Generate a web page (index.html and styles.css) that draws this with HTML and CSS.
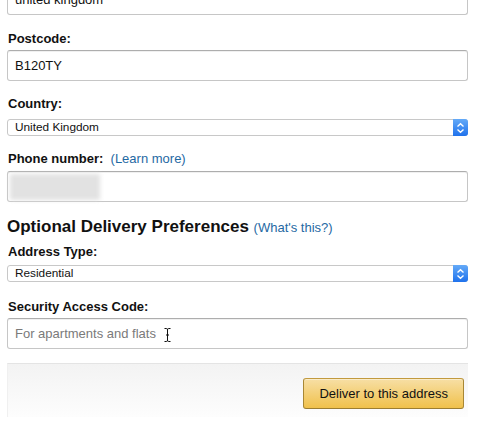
FILE: index.html
```html
<!DOCTYPE html>
<html>
<head>
<meta charset="utf-8">
<link rel="stylesheet" href="styles.css">
</head>
<body>
<div class="form">
  <div class="field first">
    <div class="input">united kingdom</div>
  </div>
  <div class="field">
    <div class="label">Postcode:</div>
    <div class="input">B120TY</div>
  </div>
  <div class="field">
    <div class="label">Country:</div>
    <div class="select country"><span class="select-text">United Kingdom</span><span class="arrows"><svg width="9" height="12" viewBox="0 0 9 12"><path d="M1.5 4.5 L4.5 1.8 L7.5 4.5 M1.5 7.5 L4.5 10.2 L7.5 7.5" fill="none" stroke="#fff" stroke-width="1.4"/></svg></span></div>
  </div>
  <div class="field">
    <div class="label phone-label">Phone number:&nbsp; <a class="link">(Learn more)</a></div>
    <div class="input phone"><span class="blur"></span></div>
  </div>
  <h2 class="heading">Optional Delivery Preferences <a class="link">(What's this?)</a></h2>
  <div class="field type">
    <div class="label">Address Type:</div>
    <div class="select"><span class="select-text">Residential</span><span class="arrows"><svg width="9" height="12" viewBox="0 0 9 12"><path d="M1.5 4.5 L4.5 1.8 L7.5 4.5 M1.5 7.5 L4.5 10.2 L7.5 7.5" fill="none" stroke="#fff" stroke-width="1.4"/></svg></span></div>
  </div>
  <div class="field last">
    <div class="label">Security Access Code:</div>
    <div class="input placeholder">For apartments and flats<span class="ibeam"><svg width="7" height="14" viewBox="0 0 7 14"><path d="M0.5 0.5 H2.5 Q3.5 0.5 3.5 2 V12 Q3.5 13.5 2.5 13.5 H0.5 M6.5 0.5 H4.5 Q3.5 0.5 3.5 2 V12 Q3.5 13.5 4.5 13.5 H6.5 M2 7 H5" fill="none" stroke="#111" stroke-width="1"/></svg></span></div>
  </div>
  <div class="footer">
    <button class="btn">Deliver to this address</button>
  </div>
</div>
</body>
</html>
```

FILE: styles.css
```css
html, body {
  margin: 0;
  padding: 0;
  background: #fff;
  overflow: hidden;
}
body {
  font-family: "Liberation Sans", Arial, sans-serif;
  font-size: 13px;
  color: #111;
}
.form {
  margin-top: -16px;
  padding: 0 20px 0 7px;
}
.field {
  margin-bottom: 15px;
}
.field.first {
  margin-bottom: 16px;
}
.field.type {
  margin-bottom: 17px;
}
.field.last {
  margin-bottom: 14px;
}
.label {
  font-weight: bold;
  line-height: 16px;
  margin-bottom: 3px;
  padding-left: 1px;
}
.label.phone-label {
  margin-bottom: 4px;
}
.label .link {
  font-weight: normal;
}
.link {
  color: #1f69a3;
  text-decoration: none;
}
.input {
  box-sizing: border-box;
  height: 31px;
  border: 1px solid #c6c6c6;
  border-top-color: #adadad;
  border-radius: 3px;
  box-shadow: inset 0 1px 0 rgba(0,0,0,0.06);
  padding: 0 7px;
  display: flex;
  align-items: center;
  font-size: 13px;
  color: #111;
}
.input.phone {
  padding: 2px 2px;
}
.blur {
  display: block;
  width: 90px;
  height: 26px;
  background: #e2e2e2;
  filter: blur(2px);
}
.input.placeholder {
  color: #7a7a7a;
}
.ibeam {
  display: inline-flex;
  margin-left: 8px;
  margin-top: 2px;
}
.select {
  box-sizing: border-box;
  height: 17px;
  border: 1px solid #c8c8c8;
  border-radius: 3px;
  display: flex;
  align-items: stretch;
  margin-top: 5px;
  background: #fff;
}
.select.country {
  margin-top: 7px;
}
.select-text {
  flex: 1;
  padding-left: 7px;
  font-size: 11.8px;
  line-height: 15px;
  color: #111;
}
.arrows {
  width: 15px;
  margin: -1px -1px -1px 0;
  border-radius: 0 3px 3px 0;
  background: linear-gradient(#64aaf8, #1f72ec);
  display: flex;
  align-items: center;
  justify-content: center;
}
.heading {
  font-size: 17px;
  line-height: 20px;
  font-weight: bold;
  margin: 0 0 6px 0;
  color: #111;
}
.heading .link {
  font-size: 13px;
  font-weight: normal;
}
.footer {
  border-top: 1px solid #e4e4e4;
  border-left: 1px solid #f0f0f0;
  background: linear-gradient(#f3f3f3, #fdfdfd);
  padding: 14px 4px 8px 0;
  display: flex;
  justify-content: flex-end;
}
.btn {
  box-sizing: border-box;
  height: 31px;
  padding: 0 15px;
  font-family: "Liberation Sans", Arial, sans-serif;
  font-size: 13px;
  color: #111;
  border: 1px solid #a88734;
  border-color: #c29a3e #a88734 #9c7e31;
  border-radius: 3px;
  background: linear-gradient(#f7dfa5, #f0c14b);
  box-shadow: inset 0 1px 0 rgba(255,255,255,0.4);
}
```
